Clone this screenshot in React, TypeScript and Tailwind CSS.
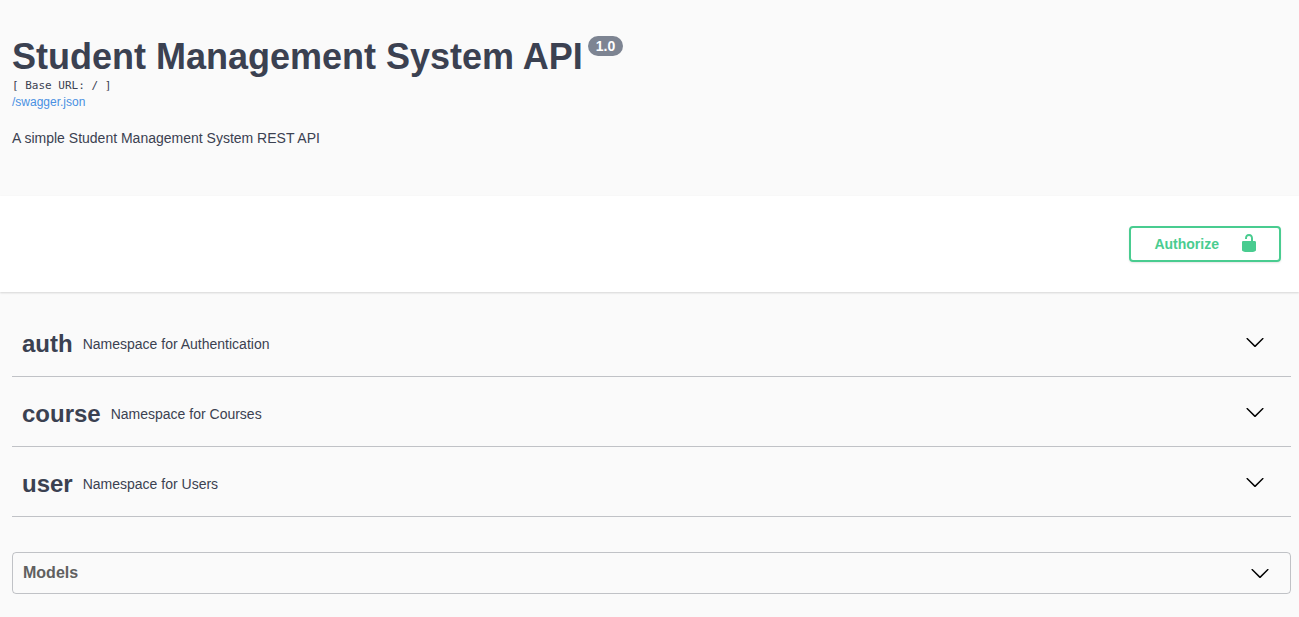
import { useState } from "react";

const namespaces = [
  { name: "auth", description: "Namespace for Authentication" },
  { name: "course", description: "Namespace for Courses" },
  { name: "user", description: "Namespace for Users" },
];

function Chevron() {
  return (
    <svg viewBox="0 0 20 20" className="size-5 shrink-0" fill="black" aria-hidden="true">
      <path d="M17.418 6.109c.272-.268.709-.268.979 0s.271.701 0 .969l-7.908 7.83c-.27.268-.707.268-.979 0l-7.908-7.83c-.27-.268-.27-.701 0-.969.271-.268.709-.268.979 0L10 13.25l7.418-7.141z" />
    </svg>
  );
}

function Unlocked() {
  return (
    <svg viewBox="0 0 20 20" className="mb-0.5 size-5 shrink-0" fill="#49cc90" aria-hidden="true">
      <path d="M15.8 8H14V5.6C14 2.703 12.665 1 10 1 7.334 1 6 2.703 6 5.6V6h2v-.801C8 3.754 8.797 3 10 3c1.203 0 2 .754 2 2.199V8H4c-.553 0-1 .646-1 1.199V17c0 .549.428 1.139.951 1.307l1.197.387C5.672 18.861 6.55 19 7.1 19h5.8c.549 0 1.428-.139 1.951-.307l1.196-.387c.524-.167.953-.757.953-1.306V9.199C17 8.646 16.352 8 15.8 8z" />
    </svg>
  );
}

export default function App() {
  const [open, setOpen] = useState<string | null>(null);
  const toggle = (name: string) => setOpen(open === name ? null : name);

  return (
    <div className="min-h-screen bg-[#fafafa] font-['Liberation_Sans',Arial,sans-serif] text-[#3b4151]">
      <header className="px-3 pt-9 pb-12">
        <div className="flex items-start gap-[5px]">
          <h1 className="text-[36px] leading-[42px] font-bold">Student Management System API</h1>
          <span className="rounded-full bg-[#7d8492] px-2 text-sm leading-5 font-bold text-white">1.0</span>
        </div>
        <p className="font-['DejaVu_Sans_Mono',monospace] text-[11px] leading-4">[ Base URL: / ]</p>
        <a href="/swagger.json" className="block text-xs leading-4 text-[#4990e2]">
          /swagger.json
        </a>
        <p className="pt-4.5 text-sm leading-5">A simple Student Management System REST API</p>
      </header>

      <section className="flex justify-end bg-white py-[30px] pr-[18px] shadow-[0_1px_2px_0_rgba(0,0,0,0.15)]">
        <button
          type="button"
          className="flex h-9 items-center gap-5 rounded border-2 border-[#49cc90] pr-5 pl-[23px] text-sm font-bold text-[#49cc90] shadow-[0_1px_2px_rgba(0,0,0,0.1)]"
        >
          <span>Authorize</span>
          <Unlocked />
        </button>
      </section>

      <main className="pt-[15px] pr-2 pb-6 pl-3">
        {namespaces.map(({ name, description }) => (
          <button
            key={name}
            type="button"
            aria-expanded={open === name}
            onClick={() => toggle(name)}
            className="flex h-[70px] w-full items-center gap-2.5 border-b border-[#3b4151]/30 pr-[26px] pl-2.5 text-left"
          >
            <span className="pt-1 text-2xl font-bold">{name}</span>
            <span className="flex-1 pt-1 text-sm">{description}</span>
            <Chevron />
          </button>
        ))}
        <button
          type="button"
          aria-expanded={open === "models"}
          onClick={() => toggle("models")}
          className="mt-[35px] flex h-[42px] w-full items-center justify-between rounded border border-[#3b4151]/30 pr-5 pl-2.5 text-base font-bold text-[#606060]"
        >
          <span>Models</span>
          <Chevron />
        </button>
      </main>
    </div>
  );
}
